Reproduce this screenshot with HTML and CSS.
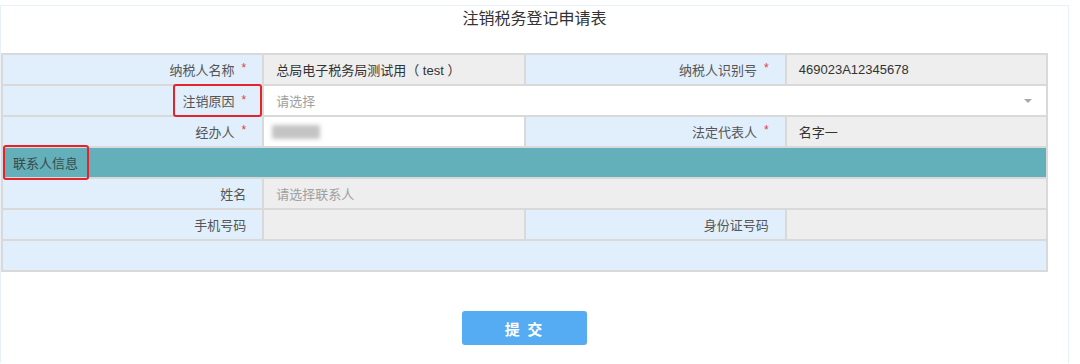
FILE: index.html
```html
<!DOCTYPE html>
<html lang="zh-CN">
<head>
    <meta charset="UTF-8">
    <meta name="viewport" content="width=device-width, initial-scale=1.0">
    <title>注销税务登记申请表</title>
    <link rel="stylesheet" href="styles.css">
</head>
<body>
    <div class="page">
        <h1 class="title">注销税务登记申请表</h1>

        <div class="form-grid">
            <div class="label">纳税人名称<span class="req">*</span></div>
            <div class="value readonly">总局电子税务局测试用（ test ）</div>
            <div class="label">纳税人识别号<span class="req">*</span></div>
            <div class="value readonly">469023A12345678</div>

            <div class="label"><span class="marked">注销原因<span class="req">*</span></span></div>
            <div class="value select span-3">
                <span class="placeholder">请选择</span>
                <span class="caret"></span>
            </div>

            <div class="label">经办人<span class="req">*</span></div>
            <div class="value"><span class="blurred"></span></div>
            <div class="label">法定代表人<span class="req">*</span></div>
            <div class="value readonly">名字一</div>

            <div class="section span-4"><span class="marked section-mark">联系人信息</span></div>

            <div class="label">姓名</div>
            <div class="value readonly span-3"><span class="placeholder">请选择联系人</span></div>

            <div class="label">手机号码</div>
            <div class="value readonly"></div>
            <div class="label">身份证号码</div>
            <div class="value readonly"></div>

            <div class="blank span-4"></div>
        </div>

        <div class="actions">
            <button type="button" class="submit">提 交</button>
        </div>
    </div>
</body>
</html>
```

FILE: styles.css
```css
/* Page base */
body {
    margin: 0;
    background-color: #ffffff;
    font-family: "Liberation Sans", "Noto Sans CJK SC", sans-serif;
    font-size: 13px;
    color: #333333;
}

/* Outer panel */
.page {
    margin-top: 5px;
    width: 1069px;
    height: calc(100vh - 6px);
    box-sizing: border-box;
    border: 1px solid #e8f1fa;
    border-bottom: none;
}

/* Heading */
.title {
    margin: 0;
    padding-top: 1px;
    height: 46px;
    line-height: 24px;
    font-size: 16px;
    font-weight: normal;
    text-align: center;
    color: #333333;
}

/* Form table */
.form-grid {
    width: 1043px;
    display: grid;
    grid-template-columns: repeat(4, 1fr);
    grid-auto-rows: 29px;
    gap: 2px;
    padding: 2px;
    background-color: #d9d9d9;
}

.span-3 {
    grid-column: span 3;
}

.span-4 {
    grid-column: span 4;
}

.label {
    background-color: #e1effd;
    color: #555555;
    display: flex;
    align-items: center;
    justify-content: flex-end;
    padding-right: 16px;
}

.req {
    color: #e83a3a;
    margin-left: 7px;
    font-size: 12px;
    position: relative;
    top: -2px;
}

.value {
    background-color: #ffffff;
    display: flex;
    align-items: center;
    padding-left: 12px;
}

.value.readonly {
    background-color: #eeeeee;
}

.placeholder {
    color: #a0a0a0;
}

.select {
    justify-content: space-between;
    padding-right: 14px;
}

.caret {
    width: 0;
    height: 0;
    border-left: 4px solid transparent;
    border-right: 4px solid transparent;
    border-top: 4px solid #a8a8a8;
}

/* Hidden name, blurred out */
.blurred {
    display: block;
    width: 48px;
    height: 14px;
    margin-left: -4px;
    background-color: #c4c4c4;
    filter: blur(2px);
}

.section {
    background-color: #63b0ba;
    display: flex;
    align-items: center;
    color: #3b4a4c;
}

.blank {
    background-color: #e1effd;
}

/* Red annotation box */
.marked {
    position: relative;
}

.marked::after {
    content: "";
    position: absolute;
    left: -10px;
    right: -16px;
    top: -7px;
    bottom: -7px;
    border: 2px solid #e5232b;
    border-radius: 3px;
}

.section-mark {
    margin-left: 10px;
}

.section-mark::after {
    left: -10px;
    right: -11px;
    top: -8px;
    bottom: -8px;
}

/* Submit button */
.actions {
    width: 1047px;
    display: flex;
    justify-content: center;
    padding-top: 39px;
}

.submit {
    width: 125px;
    height: 34px;
    border: none;
    border-radius: 3px;
    background-color: #55acf2;
    color: #ffffff;
    font-family: "Noto Sans CJK SC", sans-serif;
    font-size: 15px;
    font-weight: bold;
    letter-spacing: 2px;
    cursor: pointer;
}
```
